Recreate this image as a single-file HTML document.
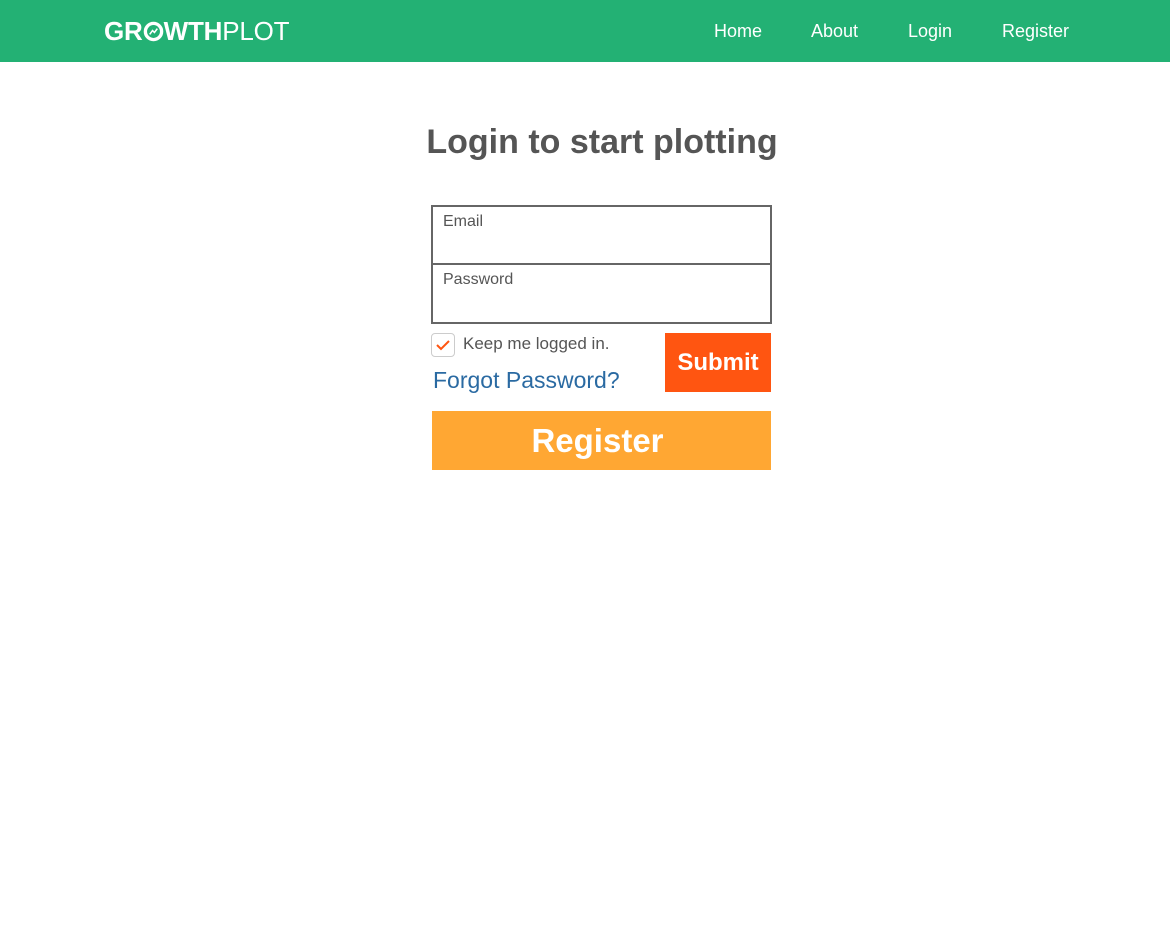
<!DOCTYPE html>
<html><head><style>
*{margin:0;padding:0;box-sizing:border-box}
body{width:1170px;height:938px;background:#fff;font-family:"Liberation Sans",sans-serif;position:relative;overflow:hidden}
.hdr{position:absolute;left:0;top:0;width:1170px;height:62px;background:#23b174}
.logo{position:absolute;left:104px;top:16px;font-size:26px;color:#fff;line-height:30px;letter-spacing:-0.2px}
.logo b{font-weight:bold}
.logo span{font-weight:normal}
.nav{position:absolute;top:20px;color:#fff;font-size:18px;line-height:22px}
.a{position:absolute}
</style></head><body>
<div class="hdr">
<div class="logo"><b>GR<svg width="21" height="21" viewBox="0 0 22 22" style="vertical-align:-2px"><circle cx="11" cy="11" r="8.5" fill="none" stroke="#fff" stroke-width="3.5"/><path d="M7 14 L10 10 L12 12 L15 8" fill="none" stroke="#fff" stroke-width="1.6"/></svg>WTH</b><span>PLOT</span></div>
<div class="nav" style="left:714px">Home</div>
<div class="nav" style="left:811px">About</div>
<div class="nav" style="left:908px">Login</div>
<div class="nav" style="left:1002px">Register</div>
</div>
<div class="a" style="left:0;width:1204px;top:121px;text-align:center;font-size:34px;font-weight:bold;color:#555;line-height:42px">Login to start plotting</div>
<div class="a" style="left:431px;top:205px;width:341px;height:60px;border:2px solid #666"></div>
<div class="a" style="left:431px;top:263px;width:341px;height:61px;border:2px solid #666"></div>
<div class="a" style="left:443px;top:213px;font-size:16px;color:#555">Email</div>
<div class="a" style="left:443px;top:271px;font-size:16px;color:#555">Password</div>
<div class="a" style="left:431px;top:333px;width:24px;height:24px;border:1px solid #ccc;border-radius:4px"><svg width="22" height="22" viewBox="0 0 22 22"><path d="M5 11 L9 15 L17 7" fill="none" stroke="#ff5511" stroke-width="2"/></svg></div>
<div class="a" style="left:463px;top:334px;font-size:17px;color:#555">Keep me logged in.</div>
<div class="a" style="left:433px;top:367px;font-size:23px;color:#2a6aa2">Forgot Password?</div>
<div class="a" style="left:665px;top:333px;width:106px;height:59px;background:#ff5511;color:#fff;font-size:24px;font-weight:bold;text-align:center;line-height:59px">Submit</div>
<div class="a" style="left:432px;top:411px;width:339px;height:59px;background:#ffa733;color:#fff;font-size:33px;font-weight:bold;text-align:center;line-height:59px;padding-right:8px">Register</div>
</body></html>
